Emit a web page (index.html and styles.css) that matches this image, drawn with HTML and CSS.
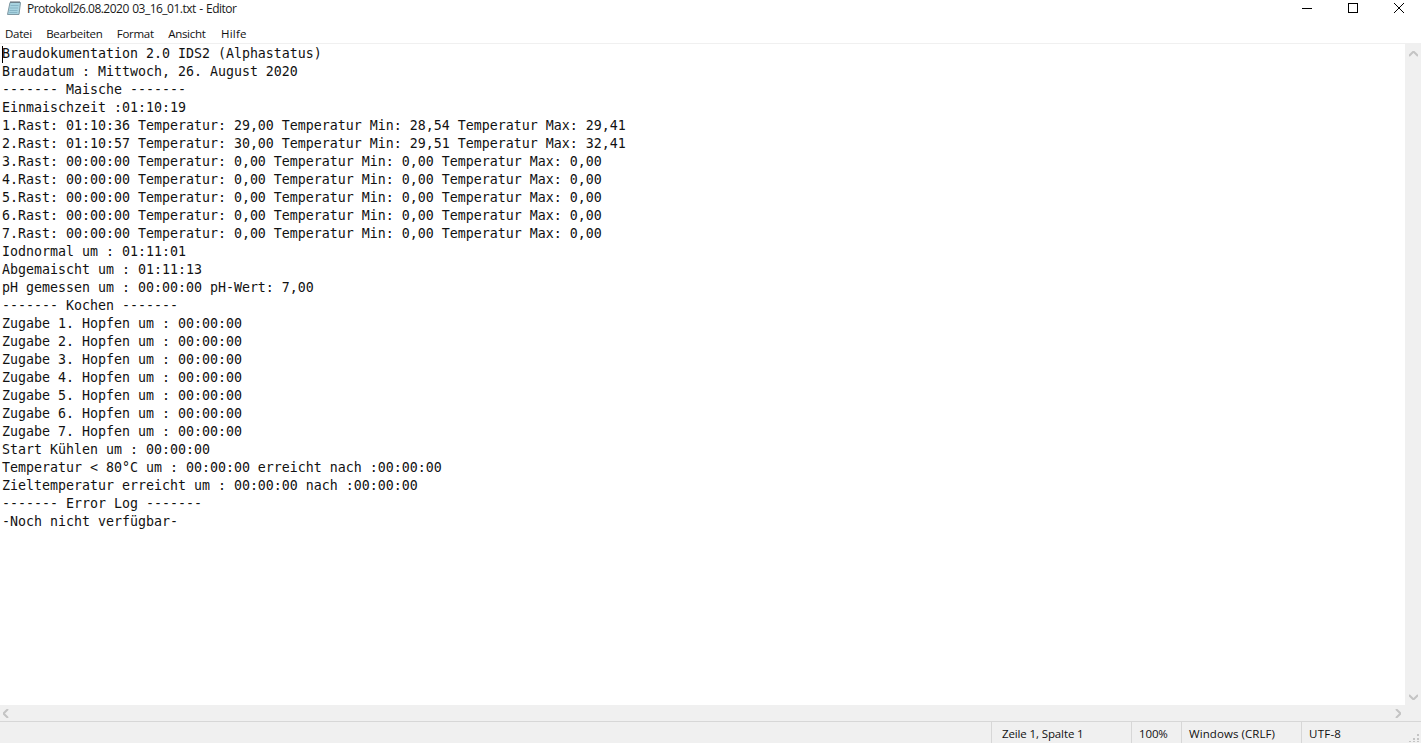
FILE: index.html
```html
<!DOCTYPE html>
<html lang="de">
<head>
<meta charset="utf-8">
<title>Protokoll26.08.2020 03_16_01.txt - Editor</title>
<link rel="stylesheet" href="styles.css">
</head>
<body>
<div class="window">
  <header class="titlebar">
    <svg class="app-icon" width="16" height="16" viewBox="0 0 16 16">
      <path d="M4 2.5h10.5l-1.5 12H1.5z" fill="#a8d3e0" stroke="#7f98a3"/>
      <path d="M4.5 5.5h8M4 8h8M3.5 10.5h8M3.3 12.5h8" stroke="#88b5c6" stroke-width="1"/>
      <path d="M5 1v2M7 1v2M9 1v2M11 1v2M13 1v2" stroke="#5c6670" stroke-width="1"/>
    </svg>
    <span class="title">Protokoll26.08.2020 03_16_01.txt - Editor</span>
    <div class="controls">
      <button class="ctl"><svg width="10" height="10" viewBox="0 0 10 10"><path d="M0 5.5h10" stroke="#000" fill="none"/></svg></button>
      <button class="ctl"><svg width="10" height="10" viewBox="0 0 10 10"><rect x=".5" y=".5" width="9" height="9" stroke="#000" fill="none"/></svg></button>
      <button class="ctl"><svg width="10" height="10" viewBox="0 0 10 10"><path d="M0 0l10 10M10 0L0 10" stroke="#000" fill="none"/></svg></button>
    </div>
  </header>
  <nav class="menubar">
    <span class="menu">Datei</span>
    <span class="menu">Bearbeiten</span>
    <span class="menu">Format</span>
    <span class="menu">Ansicht</span>
    <span class="menu menu-last">Hilfe</span>
  </nav>
  <main class="editor">
    <div class="content"><span class="caret"></span><pre class="text">Braudokumentation 2.0 IDS2 (Alphastatus)
Braudatum : Mittwoch, 26. August 2020
------- Maische -------
Einmaischzeit :01:10:19
1.Rast: 01:10:36 Temperatur: 29,00 Temperatur Min: 28,54 Temperatur Max: 29,41
2.Rast: 01:10:57 Temperatur: 30,00 Temperatur Min: 29,51 Temperatur Max: 32,41
3.Rast: 00:00:00 Temperatur: 0,00 Temperatur Min: 0,00 Temperatur Max: 0,00
4.Rast: 00:00:00 Temperatur: 0,00 Temperatur Min: 0,00 Temperatur Max: 0,00
5.Rast: 00:00:00 Temperatur: 0,00 Temperatur Min: 0,00 Temperatur Max: 0,00
6.Rast: 00:00:00 Temperatur: 0,00 Temperatur Min: 0,00 Temperatur Max: 0,00
7.Rast: 00:00:00 Temperatur: 0,00 Temperatur Min: 0,00 Temperatur Max: 0,00
Iodnormal um : 01:11:01
Abgemaischt um : 01:11:13
pH gemessen um : 00:00:00 pH-Wert: 7,00
------- Kochen -------
Zugabe 1. Hopfen um : 00:00:00
Zugabe 2. Hopfen um : 00:00:00
Zugabe 3. Hopfen um : 00:00:00
Zugabe 4. Hopfen um : 00:00:00
Zugabe 5. Hopfen um : 00:00:00
Zugabe 6. Hopfen um : 00:00:00
Zugabe 7. Hopfen um : 00:00:00
Start Kühlen um : 00:00:00
Temperatur &lt; 80°C um : 00:00:00 erreicht nach :00:00:00
Zieltemperatur erreicht um : 00:00:00 nach :00:00:00
------- Error Log -------
-Noch nicht verfügbar-</pre></div>
    <div class="vscroll">
      <svg width="9" height="6" viewBox="0 0 9 6"><path d="M0 5l4.5-4.5L9 5" stroke="#c4c4c4" stroke-width="2" fill="none"/></svg>
      <svg width="9" height="6" viewBox="0 0 9 6"><path d="M0 1l4.5 4.5L9 1" stroke="#c4c4c4" stroke-width="2" fill="none"/></svg>
    </div>
  </main>
  <div class="hscroll">
    <svg width="6" height="9" viewBox="0 0 6 9"><path d="M5 0L.5 4.5 5 9" stroke="#c4c4c4" stroke-width="2" fill="none"/></svg>
    <svg width="6" height="9" viewBox="0 0 6 9"><path d="M1 0l4.5 4.5L1 9" stroke="#c4c4c4" stroke-width="2" fill="none"/></svg>
  </div>
  <footer class="statusbar">
    <span class="cell cell-pos">Zeile 1, Spalte 1</span>
    <span class="cell cell-zoom">100%</span>
    <span class="cell cell-eol">Windows (CRLF)</span>
    <span class="cell cell-enc">UTF-8</span>
    <svg class="grip" width="10" height="10" viewBox="0 0 10 10"><path d="M8 2h2v2H8zM4 6h2v2H4zM8 6h2v2H8zM0 9h2v1H0zM4 9h2v1H4zM8 9h2v1H8z" fill="#c4c4c4"/></svg>
  </footer>
</div>
</body>
</html>
```

FILE: styles.css
```css
html, body {
  margin: 0;
  height: 100%;
  overflow: hidden;
  background: #fff;
}
.window {
  display: flex;
  flex-direction: column;
  height: 743px;
  font-family: "Open Sans", "Noto Sans", sans-serif;
  font-size: 12px;
  color: #000;
}
.titlebar {
  display: flex;
  align-items: center;
  height: 24px;
  flex: none;
  padding-left: 6px;
  box-sizing: border-box;
}
.app-icon { flex: none; margin-top: -8px; }
.title {
  margin-left: 5px;
  margin-top: -8px;
  font-size: 12px;
  letter-spacing: -0.52px;
  word-spacing: 0.9px;
  color: #1a1a1a;
}
.controls {
  display: flex;
  margin-left: auto;
  margin-right: -1px;
  align-self: flex-start;
}
.ctl {
  width: 46px;
  height: 16px;
  padding: 0;
  border: 0;
  background: none;
  display: flex;
  align-items: center;
  justify-content: center;
}
.menubar {
  display: flex;
  align-items: center;
  height: 20px;
  flex: none;
  box-sizing: border-box;
  border-bottom: 1px solid #f0f0f0;
  padding-left: 5px;
  gap: 14.3px;
}
.menu {
  font-size: 11.5px;
  letter-spacing: -0.27px;
  color: #111;
}
.menu-last { margin-left: 1px; letter-spacing: 0.25px; }
.editor {
  flex: 1;
  display: flex;
  min-height: 0;
}
.content {
  flex: 1;
  position: relative;
  padding: 1px 0 0 2px;
  min-width: 0;
}
.caret {
  position: absolute;
  left: 2px;
  top: 2px;
  width: 1px;
  height: 17px;
  background: #000;
}
.text {
  margin: 0;
  font-family: "DejaVu Sans Mono", "Liberation Mono", monospace;
  font-size: 13.29px;
  line-height: 18px;
  color: #111;
}
.vscroll {
  width: 16px;
  flex: none;
  background: #f0f0f0;
  display: flex;
  flex-direction: column;
  justify-content: space-between;
  align-items: center;
  padding: 7px 0 5px;
  box-sizing: border-box;
}
.hscroll {
  height: 16px;
  flex: none;
  background: #f0f0f0;
  display: flex;
  align-items: center;
  justify-content: space-between;
  padding: 0 20px 0 3px;
}
.statusbar {
  height: 22px;
  flex: none;
  box-sizing: border-box;
  display: flex;
  align-items: stretch;
  justify-content: flex-end;
  position: relative;
  background: #f0f0f0;
  border-top: 1px solid #d7d7d7;
  font-size: 11.5px;
  letter-spacing: -0.12px;
  color: #111;
}
.cell {
  display: flex;
  align-items: center;
  box-sizing: border-box;
  border-left: 1px solid #d7d7d7;
  padding-top: 1px;
}
.cell-pos { width: 140px; padding-left: 10px; }
.cell-zoom { width: 50px; padding-left: 7px; }
.cell-eol { width: 120px; padding-left: 7px; letter-spacing: 0.08px; }
.cell-enc { width: 120px; padding-left: 7px; letter-spacing: 0.25px; }
.grip {
  position: absolute;
  right: 2px;
  bottom: 1px;
}
```
